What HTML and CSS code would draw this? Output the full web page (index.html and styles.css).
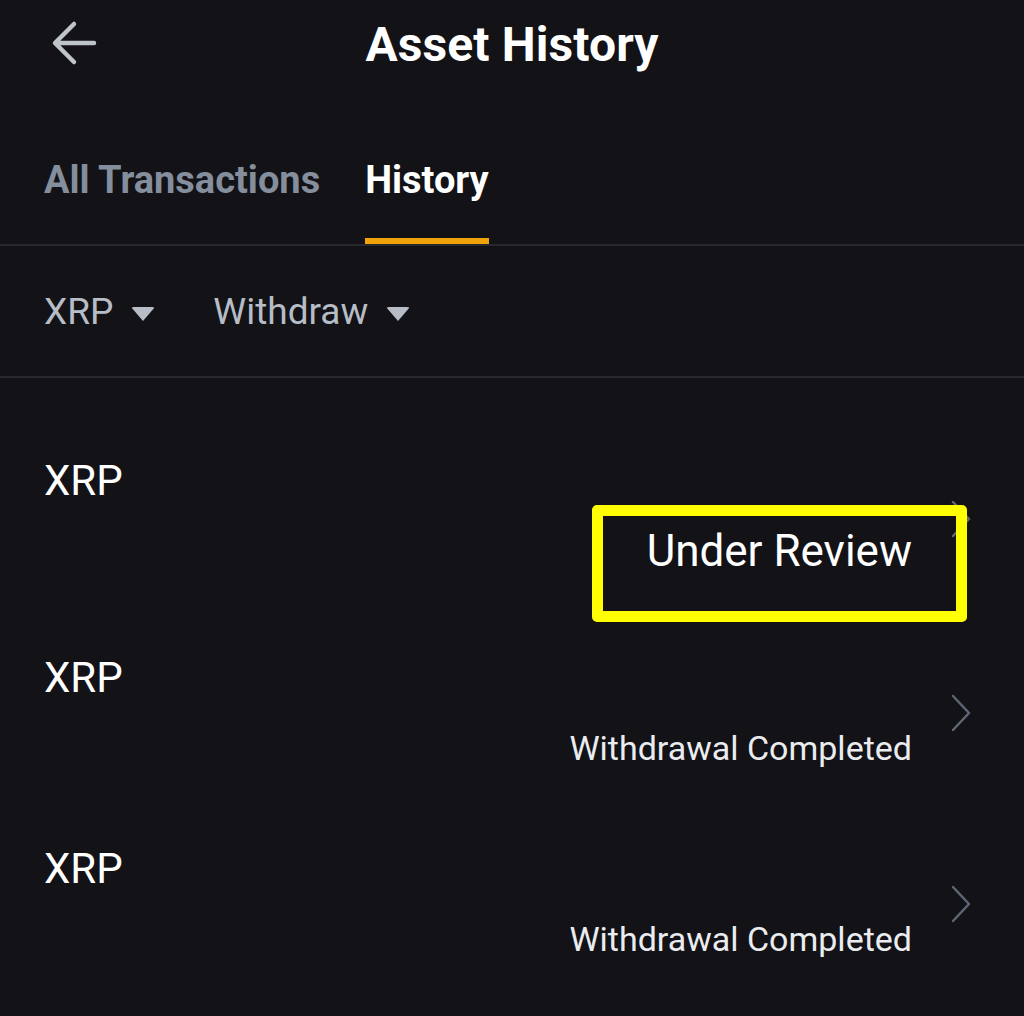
FILE: index.html
```html
<!DOCTYPE html>
<html lang="en">
<head>
  <meta charset="UTF-8" />
  <meta name="viewport" content="width=device-width, initial-scale=1.0" />
  <title>Asset History</title>
  <link rel="stylesheet" href="styles.css">
</head>
<body>
  <header class="topbar">
    <a class="back" href="#">
      <svg width="48" height="46" viewBox="0 0 48 46">
        <path d="M44 23 H6 M24 4 L5 23 L24 42" fill="none" stroke="#bfc3ca" stroke-width="4.5" stroke-linecap="round" stroke-linejoin="round" />
      </svg>
    </a>
    <h1>Asset History</h1>
  </header>

  <nav class="tabs">
    <a class="tab" href="#">All Transactions</a>
    <a class="tab active" href="#">History</a>
  </nav>

  <div class="filters">
    <button class="filter">XRP <span class="caret"></span></button>
    <button class="filter">Withdraw <span class="caret"></span></button>
  </div>

  <ul class="records">
    <li class="record">
      <div class="record-main">
        <div class="coin">XRP</div>
        <div class="status big">Under Review</div>
      </div>
      <svg class="chevron" width="22" height="40" viewBox="0 0 22 40">
        <path d="M3 3 L19 20 L3 37" fill="none" stroke="#5e6673" stroke-width="2.5" stroke-linecap="round" stroke-linejoin="round" />
      </svg>
      <div class="highlight"></div>
    </li>
    <li class="record">
      <div class="record-main">
        <div class="coin">XRP</div>
        <div class="status">Withdrawal Completed</div>
      </div>
      <svg class="chevron" width="22" height="40" viewBox="0 0 22 40">
        <path d="M3 3 L19 20 L3 37" fill="none" stroke="#5e6673" stroke-width="2.5" stroke-linecap="round" stroke-linejoin="round" />
      </svg>
    </li>
    <li class="record">
      <div class="record-main">
        <div class="coin">XRP</div>
        <div class="status">Withdrawal Completed</div>
      </div>
      <svg class="chevron" width="22" height="40" viewBox="0 0 22 40">
        <path d="M3 3 L19 20 L3 37" fill="none" stroke="#5e6673" stroke-width="2.5" stroke-linecap="round" stroke-linejoin="round" />
      </svg>
    </li>
  </ul>
</body>
</html>
```

FILE: styles.css
```css
body {
  margin: 0;
  padding: 0;
  background: #121217;
  color: #eaecef;
  font-family: Roboto, "Liberation Sans", sans-serif;
  overflow: hidden;
}
.topbar {
  position: relative;
  height: 88px;
  display: flex;
  align-items: center;
  justify-content: center;
}
.back {
  position: absolute;
  left: 50px;
  top: 20px;
  line-height: 0;
}
.topbar h1 {
  margin: 0;
  font-size: 48px;
  font-weight: 700;
  color: #ffffff;
  letter-spacing: 0.1px;
}
.tabs {
  display: flex;
  gap: 45px;
  height: 158px;
  align-items: flex-end;
  padding: 0 44px;
  border-bottom: 2px solid #26282e;
  box-sizing: border-box;
}
.tab {
  font-size: 38px;
  font-weight: 700;
  line-height: 48px;
  color: #848e9c;
  text-decoration: none;
  padding-bottom: 34px;
  border-bottom: 6px solid transparent;
}
.tab.active {
  color: #ffffff;
  border-bottom-color: #f0a30a;
}
.filters {
  display: flex;
  gap: 58px;
  height: 132px;
  align-items: center;
  padding: 0 44px;
  border-bottom: 2px solid #26282e;
  box-sizing: border-box;
}
.filter {
  background: none;
  border: none;
  padding: 0;
  font-family: inherit;
  font-size: 37px;
  color: #b7bdc6;
  display: flex;
  align-items: center;
  gap: 18px;
  cursor: pointer;
}
.caret {
  width: 0;
  height: 0;
  border-left: 12px solid transparent;
  border-right: 12px solid transparent;
  border-top: 14px solid #b7bdc6;
  border-radius: 3px;
  margin-top: 6px;
}
.records {
  list-style: none;
  margin: 0;
  padding: 0;
}
.record {
  position: relative;
  display: flex;
  align-items: center;
  padding: 78px 52px 0 44px;
  margin-bottom: -7px;
}
.record-main {
  flex: 1;
}
.coin {
  font-size: 42px;
  line-height: 50px;
  color: #ffffff;
}
.status {
  margin-top: 20px;
  font-size: 34px;
  line-height: 50px;
  text-align: right;
  color: #eaecef;
}
.status.big {
  font-size: 44px;
  color: #ffffff;
  margin-bottom: 6px;
}
.chevron {
  margin-left: 38px;
}
.highlight {
  position: absolute;
  left: 592px;
  top: 127px;
  width: 375px;
  height: 117px;
  border: 11px solid #ffff00;
  border-radius: 5px;
  box-sizing: border-box;
}
```
